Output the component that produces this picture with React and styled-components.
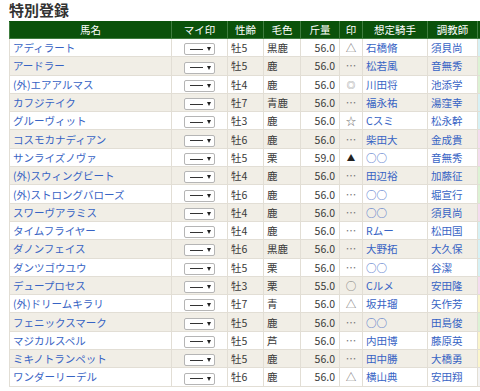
import React from "react";
import styled, { createGlobalStyle } from "styled-components";

const GlobalStyle = createGlobalStyle`
  html, body {
    margin: 0;
    padding: 0;
    background: #fff;
    overflow: hidden;
  }
  body {
    font-family: "Noto Sans CJK JP", "Noto Sans", sans-serif;
    color: #333;
  }
`;

const Page = styled.div`
  width: 480px;
  height: 391px;
  overflow: hidden;
  padding: 0 0 0 9px;
  box-sizing: border-box;
`;

const Title = styled.h2`
  margin: 0;
  height: 21px;
  font-size: 15px;
  line-height: 20px;
  font-weight: 700;
  color: #333;
`;

const Table = styled.table`
  border-collapse: collapse;
  table-layout: fixed;
  width: 500px;
  font-size: 10.5px;
`;

const HeadCell = styled.th`
  height: 16px;
  padding: 0;
  background: #0b520b;
  color: #fff;
  font-weight: 400;
  font-size: 10.5px;
  line-height: 16px;
  text-align: center;
  border: 1px solid #3f7d3f;
  border-top-color: #0b520b;
  white-space: nowrap;
`;

const Row = styled.tr`
  background: ${(p) => (p.$alt ? "#f1eee6" : "#fff")};
`;

const Cell = styled.td`
  height: 17.3px;
  padding: 0 ${(p) => (p.$align === "right" ? "4px" : "3px")};
  border: 1px solid #e2ded5;
  text-align: ${(p) => p.$align || "left"};
  line-height: 15px;
  color: #3a3a3a;
  white-space: nowrap;
  overflow: hidden;
`;

const ColorCell = styled.td`
  padding: 0;
  border: 1px solid #e2ded5;
  background: ${(p) => p.$tone};
`;

const NameLink = styled.a`
  color: #3763c4;
  text-decoration: none;
`;

const Person = styled.span`
  color: #3763c4;
`;

const Mark = styled.span`
  color: ${(p) => (p.$dark ? "#222" : "#777")};
  font-size: ${(p) => (p.$small ? "8.5px" : "10.5px")};
`;

const Select = styled.span`
  display: inline-flex;
  align-items: center;
  gap: 4px;
  width: 31px;
  height: 12px;
  box-sizing: border-box;
  padding: 0 3px 0 5px;
  border: 1px solid #b5b5b5;
  border-radius: 2px;
  background: #fff;
  vertical-align: middle;
`;

const Dash = styled.span`
  width: 13px;
  height: 1px;
  background: #333;
`;

const Arrow = styled.span`
  width: 0;
  height: 0;
  border-left: 2.5px solid transparent;
  border-right: 2.5px solid transparent;
  border-top: 4px solid #222;
`;

const tones = {
  c: "#d7f1f5",
  g: "#dcf2d4",
  p: "#f4dcef",
  y: "#fbf6cc",
  w: "#f4f4f4",
};

const horses = [
  ["アディラート", "牡5", "黒鹿", "56.0", "△", "石橋脩", "須貝尚", "c"],
  ["アードラー", "牡5", "鹿", "56.0", "…", "松若風", "音無秀", "g"],
  ["(外)エアアルマス", "牡4", "鹿", "56.0", "◎", "川田将", "池添学", "g"],
  ["カフジテイク", "牡7", "青鹿", "56.0", "…", "福永祐", "湯窪幸", "c"],
  ["グルーヴィット", "牡3", "鹿", "56.0", "☆", "Cスミ", "松永幹", "c"],
  ["コスモカナディアン", "牡6", "鹿", "56.0", "…", "柴田大", "金成貴", "p"],
  ["サンライズノヴァ", "牡5", "栗", "59.0", "▲", "○○", "音無秀", "p"],
  ["(外)スウィングビート", "牡4", "鹿", "56.0", "…", "田辺裕", "加藤征", "g"],
  ["(外)ストロングバローズ", "牡6", "鹿", "56.0", "…", "○○", "堀宣行", "g"],
  ["スワーヴアラミス", "牡4", "鹿", "56.0", "…", "○○", "須貝尚", "p"],
  ["タイムフライヤー", "牡4", "鹿", "56.0", "…", "Rムー", "松田国", "c"],
  ["ダノンフェイス", "牡6", "黒鹿", "56.0", "…", "大野拓", "大久保", "c"],
  ["ダンツゴウユウ", "牡5", "栗", "56.0", "…", "○○", "谷潔", "c"],
  ["デュープロセス", "牡3", "栗", "55.0", "○", "Cルメ", "安田隆", "p"],
  ["(外)ドリームキラリ", "牡7", "青", "56.0", "△", "坂井瑠", "矢作芳", "y"],
  ["フェニックスマーク", "牡5", "鹿", "56.0", "…", "○○", "田島俊", "g"],
  ["マジカルスペル", "牡5", "芦", "56.0", "…", "内田博", "藤原英", "y"],
  ["ミキノトランペット", "牡5", "鹿", "56.0", "…", "田中勝", "大橋勇", "y"],
  ["ワンダーリーデル", "牡6", "鹿", "56.0", "△", "横山典", "安田翔", "w"],
];

const widths = [162, 56, 36, 37, 39, 23, 65, 50, 32];

export default function App() {
  return (
    <Page>
      <GlobalStyle />
      <Title>特別登録</Title>
      <Table>
        <colgroup>
          {widths.map((w, i) => (
            <col key={i} style={{ width: w }} />
          ))}
        </colgroup>
        <thead>
          <tr>
            <HeadCell>馬名</HeadCell>
            <HeadCell>マイ印</HeadCell>
            <HeadCell>性齢</HeadCell>
            <HeadCell>毛色</HeadCell>
            <HeadCell>斤量</HeadCell>
            <HeadCell>印</HeadCell>
            <HeadCell>想定騎手</HeadCell>
            <HeadCell>調教師</HeadCell>
            <HeadCell />
          </tr>
        </thead>
        <tbody>
          {horses.map(([name, sex, coat, weight, mark, jockey, trainer, tone], i) => (
            <Row key={name} $alt={i % 2 === 1}>
              <Cell>
                <NameLink href="#">{name}</NameLink>
              </Cell>
              <Cell $align="center">
                <Select>
                  <Dash />
                  <Arrow />
                </Select>
              </Cell>
              <Cell>{sex}</Cell>
              <Cell>{coat}</Cell>
              <Cell $align="right">{weight}</Cell>
              <Cell $align="center">
                <Mark $small={mark === "◎" || mark === "▲"} $dark={mark === "▲"}>
                  {mark}
                </Mark>
              </Cell>
              <Cell>
                <Person>{jockey}</Person>
              </Cell>
              <Cell>
                <Person>{trainer}</Person>
              </Cell>
              <ColorCell $tone={tones[tone]} />
            </Row>
          ))}
        </tbody>
      </Table>
    </Page>
  );
}
